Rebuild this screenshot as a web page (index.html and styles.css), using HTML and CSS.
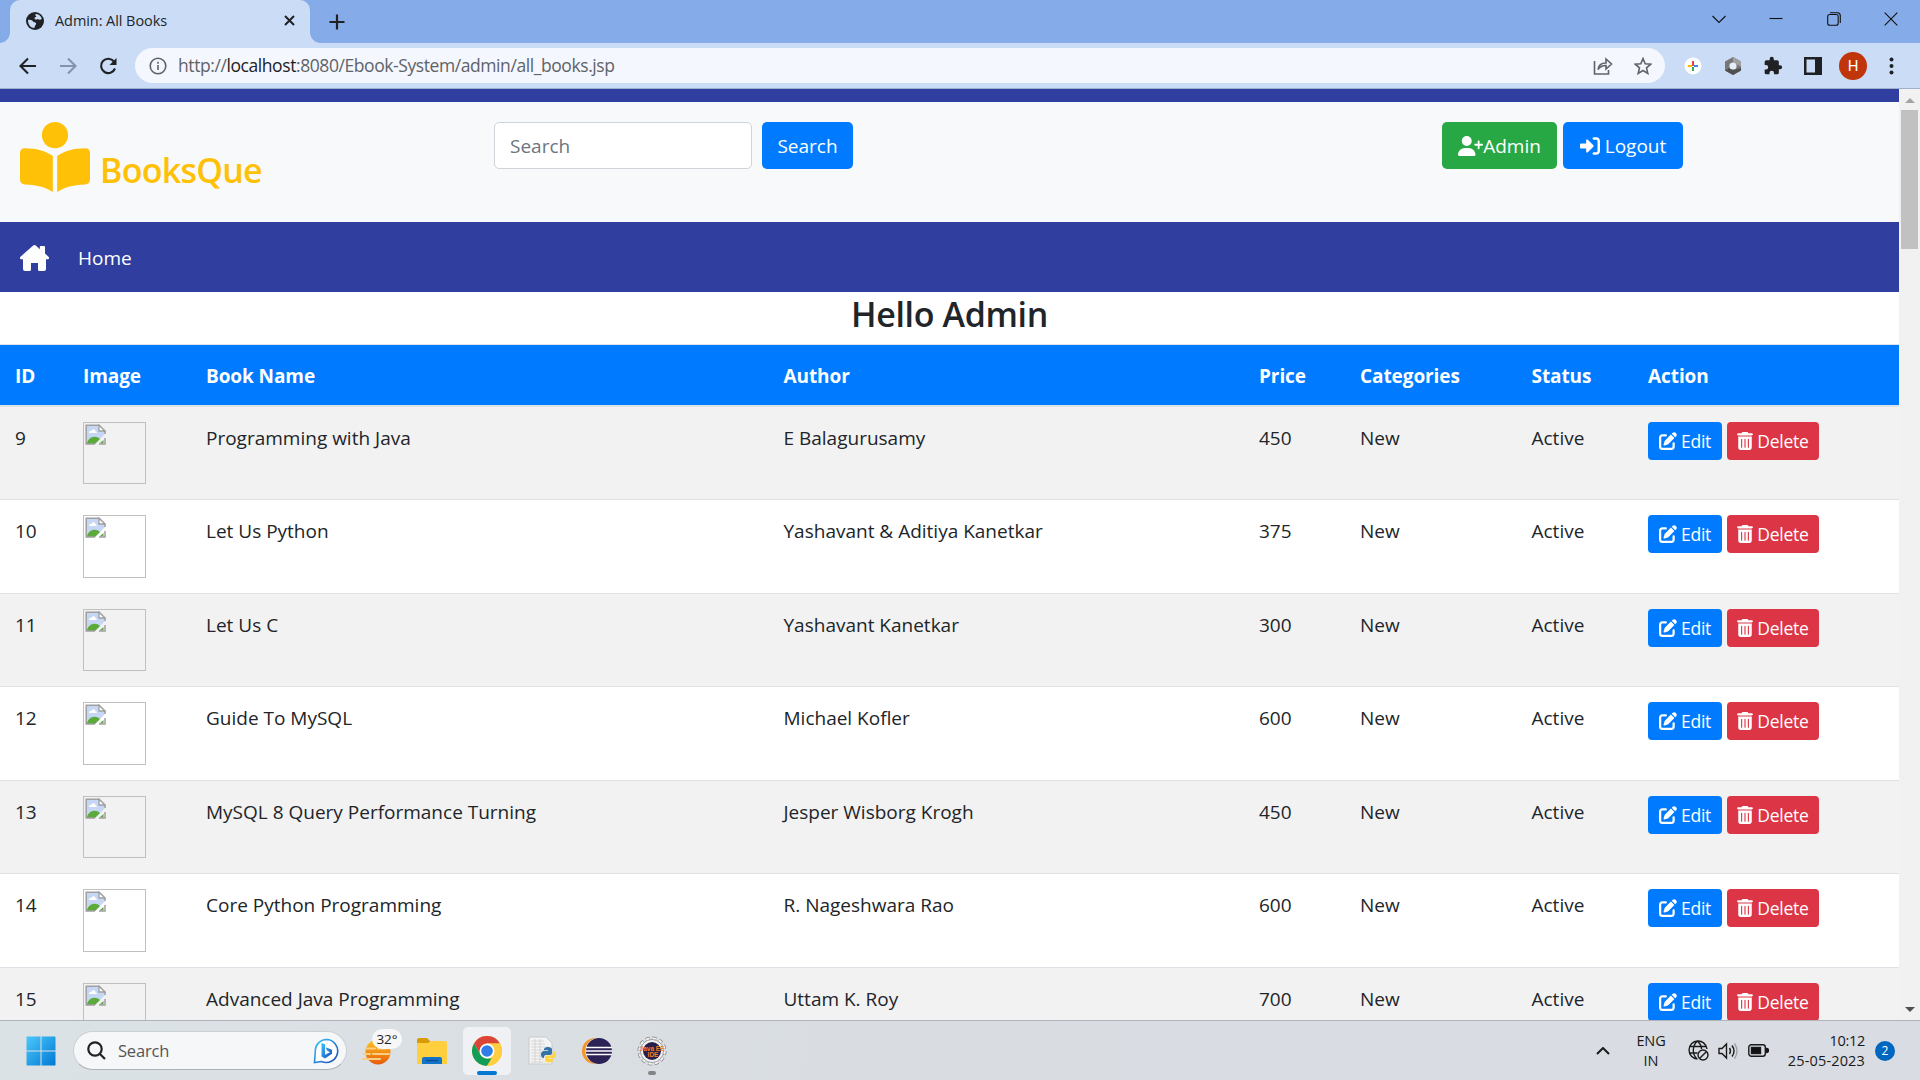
FILE: index.html
```html
<!DOCTYPE html>
<html lang="en">
<head>
<meta charset="utf-8">
<title>Admin: All Books</title>
<link rel="stylesheet" href="styles.css">
</head>
<body>
<svg class="defs" width="0" height="0" aria-hidden="true">
  <symbol id="edit" viewBox="0 0 512 512"><path d="M471.600 21.700c-21.900-21.900-57.300-21.900-79.200 0L362.300 51.700l97.900 97.900 30.100-30.100c21.900-21.900 21.900-57.300 0-79.200L471.600 21.700zm-299.200 220c-6.100 6.100-10.800 13.600-13.500 21.900l-29.600 88.800c-2.900 8.600-.6 18.100 5.800 24.600s15.900 8.700 24.600 5.800l88.800-29.600c8.200-2.700 15.700-7.400 21.900-13.500L437.700 172.300 339.700 74.300 172.400 241.700zM96 64C43 64 0 107 0 160V416c0 53 43 96 96 96H352c53 0 96-43 96-96V320c0-17.700-14.300-32-32-32s-32 14.300-32 32v96c0 17.700-14.300 32-32 32H96c-17.700 0-32-14.300-32-32V160c0-17.700 14.300-32 32-32h96c17.700 0 32-14.300 32-32s-14.300-32-32-32H96z"/></symbol>
  <symbol id="trash" viewBox="0 0 448 512"><path fill-rule="evenodd" d="M135.200 17.700C140.600 6.800 151.700 0 163.800 0H284.200c12.100 0 23.200 6.800 28.600 17.700L320 32h96c17.700 0 32 14.300 32 32s-14.300 32-32 32H32C14.300 96 0 81.700 0 64S14.300 32 32 32h96l7.200-14.300zM32 128H416V448c0 35.300-28.700 64-64 64H96c-35.300 0-64-28.700-64-64V128zm80 80V432c0 22 32 22 32 0V208c0-22-32-22-32 0zm96 0V432c0 22 32 22 32 0V208c0-22-32-22-32 0zm96 0V432c0 22 32 22 32 0V208c0-22-32-22-32 0z"/></symbol>
  <symbol id="broken" viewBox="0 0 21 21"><path fill="#c5d7f5" d="M1 1h13l6 6v3L10 20H1z"/><path fill="#fff" d="M4 9c0-2 2-2.500 2.500-2C7 4.500 10.500 4.500 10.500 7.500c2 0 2 1.500 0 1.500z"/><path fill="#5bab3a" d="M2 19c2-7 9-8 13-4l-5 5H2zM18.500 16v3.500h-4z"/><path fill="none" stroke="#a0a0a0" stroke-width="1.500" d="M10 20H1.200V1.200H14l6 6V10M20 14v6h-6"/><path fill="#fff" stroke="#a0a0a0" stroke-width="1.300" d="M14 1.200V7h6z"/></symbol>
</svg>

<header class="tabs">
  <div class="tab">
    <svg class="globe" viewBox="0 0 18 18"><circle cx="9" cy="9" r="9" fill="#202124"/><path fill="#cbdcf7" d="M2 8c2.500-.5 4.500.5 5.500 2 2 0 3 1 2.500 2.500-1 1-1.500 2-1.500 3.500C4.500 16 2 12.500 2 8zM9.500 2c3 0 5.500 2 6.300 4.800-1 1.400-3 1.200-4 .2-1 1-3.300.8-3.300-.8 0-1 1-1.200 2-1.200C10 4 9 3.500 9.500 2z"/></svg>
    <span class="tab-title">Admin: All Books</span>
    <svg class="tab-close" viewBox="0 0 11 11"><path d="M1 1l9 9M10 1l-9 9" stroke="#202124" stroke-width="2"/></svg>
  </div>
  <svg class="tab-new" viewBox="0 0 16 16"><path d="M8 .5v15M.5 8h15" stroke="#202124" stroke-width="2.200"/></svg>
  <div class="window-controls">
    <svg viewBox="0 0 14 14"><path d="M.5 4L7 10.500 13.500 4"/></svg>
    <svg viewBox="0 0 14 14"><path d="M.5 6.500h13"/></svg>
    <svg viewBox="0 0 14 14"><rect x=".7" y="2.500" width="10.500" height="10.800" rx="2"/><path d="M3 .7h7.500a3 3 0 0 1 2.800 3V11"/></svg>
    <svg viewBox="0 0 14 14"><path d="M.7.700l12.600 12.600M13.300.700L.7 13.300"/></svg>
  </div>
</header>

<div class="toolbar">
  <svg class="nav-icon" viewBox="0 0 18 18"><path d="M17 9H2M9 1.500L1.500 9 9 16.500"/></svg>
  <svg class="nav-icon muted" viewBox="0 0 18 18"><path d="M1 9h15M9 1.500L16.500 9 9 16.500"/></svg>
  <svg class="nav-icon" viewBox="0 0 18 18"><path d="M15 4.500A7.200 7.200 0 1 0 16 11.500"/><path d="M17.500 1v7h-7z" fill="#202124" stroke="none"/></svg>
  <div class="address">
    <svg class="info" viewBox="0 0 18 18"><circle cx="9" cy="9" r="7.800"/><path d="M9 8v5M9 4.800v2"/></svg>
    <span class="url">http://<b>localhost</b>:8080/Ebook-System/admin/all_books.jsp</span>
    <svg class="share" viewBox="0 0 20 18"><path d="M1.500 4v13h14v-4M5 12.500c.5-4 3.500-6.500 8-6.500V2l5.500 5-5.500 5V8.500c-3.500 0-6 1-8 4z"/></svg>
    <svg class="star" viewBox="0 0 18 18"><path d="M9 1.600l2.200 5.200 5.600.4-4.300 3.700 1.300 5.500L9 13.500l-4.800 2.900 1.300-5.500L1.200 7.200l5.600-.4z"/></svg>
  </div>
  <div class="extensions">
    <svg viewBox="0 0 20 20"><circle cx="10" cy="10" r="8.500" fill="#fff"/><g stroke-width="2"><path stroke="#ea4335" d="M10 5v5"/><path stroke="#fbbc04" d="M5 10h4"/><path stroke="#34a853" d="M10 11v4"/><path stroke="#4285f4" d="M11 10h4"/></g></svg>
    <svg viewBox="0 0 20 20"><path fill="#777" d="M10 1l8 4.500v9L10 19l-8-4.500v-9z"/><path fill="#505050" d="M2 14.500l5-3 3 2.500 8-2v2.500L10 19z"/><path fill="#a0a0a0" d="M10 1l8 4.500v5l-4-2L10 6z"/><circle cx="10" cy="10" r="3.600" fill="#e6edf8"/></svg>
    <svg viewBox="0 0 24 24"><path fill="#202124" d="M20.500 11H19V7a2 2 0 0 0-2-2h-4V3.500a2.500 2.500 0 0 0-5 0V5H4a2 2 0 0 0-2 2v3.800h1.500a2.700 2.700 0 0 1 0 5.400H2V20a2 2 0 0 0 2 2h3.800v-1.500a2.700 2.700 0 0 1 5.400 0V22H17a2 2 0 0 0 2-2v-4h1.500a2.500 2.500 0 0 0 0-5z"/></svg>
    <svg viewBox="0 0 20 20"><path fill="#202124" fill-rule="evenodd" d="M1 1h18v18H1zM3.500 3.500v13H12v-13z"/></svg>
    <span class="avatar">H</span>
    <svg class="dots" viewBox="0 0 5 18"><circle cx="2.500" cy="2.500" r="2"/><circle cx="2.500" cy="9" r="2"/><circle cx="2.500" cy="15.500" r="2"/></svg>
  </div>
</div>

<div class="viewport">
  <main class="page">
    <div class="strip"></div>
    <div class="brand-bar">
      <h3 class="brand">
        <svg viewBox="0 0 512 512"><path d="M352 96c0 53-43 96-96 96s-96-43-96-96S203 0 256 0s96 43 96 96zM240 248V512c-52-32-104-51-206-55C15 456 0 441 0 423V224c0-18 14-32 32-32 86 0 156 20 208 56zM272 512V248c52-36 122-56 208-56 18 0 32 14 32 32V423c0 18-15 33-34 34-102 4-154 23-206 55z"/></svg>
        <span>BooksQue</span>
      </h3>
      <form class="search">
        <input type="text" placeholder="Search">
        <button type="button" class="btn primary">Search</button>
      </form>
      <div class="account">
        <a class="btn success"><svg class="user" viewBox="0 0 640 512"><path d="M96 128a128 128 0 1 1 256 0 128 128 0 1 1-256 0zM0 482c0-98 80-178 178-178h92c98 0 178 80 178 178 0 17-13 30-30 30H30c-17 0-30-13-30-30zM504 312V248H440c-32 0-32-48 0-48h64V136c0-32 48-32 48 0v64h64c32 0 32 48 0 48H552v64c0 32-48 32-48 0z"/></svg><span>Admin</span></a>
        <a class="btn primary"><svg class="login" viewBox="0 0 512 512"><path d="M352 96h64c18 0 32 14 32 32V384c0 18-14 32-32 32H352c-43 0-43 64 0 64h64c53 0 96-43 96-96V128c0-53-43-96-96-96H352c-43 0-43 64 0 64zM343 239L199 95c-7-7-17-9-26-5s-15 13-15 22v80H32c-18 0-32 14-32 32v64c0 18 14 32 32 32H158v80c0 10 6 18 15 22s19 2 26-5L343 273c9-9 9-25 0-34z"/></svg><span>Logout</span></a>
      </div>
    </div>
    <nav class="navbar">
      <svg viewBox="0 0 29 26"><path d="M13.200.6a2 2 0 0 1 2.600 0l4 3.600V2q0-1 1-1H24q1 0 1 1v6.500l3.500 3.200c1 1 .5 2.600-.8 2.600H26V24q0 2-2 2h-4.500q-1.500 0-1.500-1.500V18h-7v6.500Q11 26 9.500 26H5q-2 0-2-2v-9.700H1.300c-1.300 0-1.800-1.600-.8-2.600z"/></svg>
      <a>Home</a>
    </nav>
    <h3 class="greeting">Hello Admin</h3>
    <div class="table">
      <div class="thead cols"><span>ID</span><span>Image</span><span>Book Name</span><span>Author</span><span>Price</span><span>Categories</span><span>Status</span><span>Action</span></div>
      <div class="tbody" id="books"></div>
    </div>
  </main>
  <aside class="scrollbar"><i class="up"></i><div class="thumb"></div><i class="down"></i></aside>
</div>

<footer class="taskbar">
  <svg class="start" viewBox="0 0 30 30"><defs><linearGradient id="w" x2="1" y2="1"><stop stop-color="#4cc8fa"/><stop offset="1" stop-color="#0078d4"/></linearGradient></defs><path fill="url(#w)" d="M1 .5h13.500V14.500H.5V1zM15.500.5H29l.5.500v13.500h-14zM.5 15.500h14v14H1l-.5-.5zM15.500 15.500h14V29l-.5.500H15.500z"/></svg>
  <div class="task-search">
    <svg class="lens" viewBox="0 0 19 19"><circle cx="8" cy="8" r="6.700"/><path d="M13 13l5 5"/></svg>
    <span>Search</span>
    <svg class="bing" viewBox="0 0 26 26"><defs><linearGradient id="b" x2="1" y2="1"><stop stop-color="#35c8f5"/><stop offset="1" stop-color="#1b49c0"/></linearGradient></defs><path d="M13.500 1.500a11.500 11.500 0 1 1-5 22L1.500 24.500l.8-11A11.400 11.400 0 0 1 13.500 1.500z" fill="#fff" stroke="url(#b)" stroke-width="1.600"/><path fill="url(#b)" d="M8.500 5l3.500 1.200v10.500l5-2.500-3-1.700-1.300-3.200 6.300 2.400v4L12 20.500l-3.500-2z"/></svg>
  </div>
  <div class="apps">
    <div class="app weather"><svg viewBox="0 0 30 30"><defs><linearGradient id="s" x2="0" y2="1"><stop stop-color="#ffc61a"/><stop offset="1" stop-color="#e8590c"/></linearGradient></defs><circle cx="16" cy="16" r="12.500" fill="url(#s)"/><path d="M4 12.500h9M16 12.500h8M2 18h6M11 18h16M1 23h17" stroke="#f6cf83" stroke-width="2.200" stroke-linecap="round"/></svg><span class="temp">32°</span></div>
    <div class="app"><svg viewBox="0 0 30 30"><path fill="#d99a08" d="M0 4q0-2 2-2h8l3 3v5H0z"/><path fill="#ffcf3f" d="M0 7h11l3-2h14q2 0 2 2v21H0z"/><path fill="#1273c8" d="M5 28v-5q0-2 2-2h16q2 0 2 2v5z"/><path d="M9 24.500h12" stroke="#0a4f94" stroke-width="1.500"/></svg></div>
    <div class="app active"><svg viewBox="0 0 30 30"><circle cx="15" cy="15" r="15" fill="#ffcd40"/><path fill="#db4437" d="M15 15L8.500 18.500 2 7.500a15 15 0 0 1 26 0H15z"/><path fill="#0f9d58" d="M2 7.500L8.500 18.700 15 22.500h6.300L14.500 30A15 15 0 0 1 2 7.500z"/><path fill="#ffcd40" d="M21.500 18.700L15 30A15 15 0 0 0 28 7.500H15z"/><circle cx="15" cy="15" r="7.500" fill="#fff"/><circle cx="15" cy="15" r="5.800" fill="#2f7de9"/></svg></div>
    <div class="app"><svg viewBox="0 0 30 30"><path fill="#f4f4f4" stroke="#c9c9c9" d="M2 1h17l6 6v21H2z"/><path d="M4 5h13M4 8h14M4 11h18M4 14h13M4 17h12M4 20h12M4 23h13M4 26h14M8 3v24M13 3v24" stroke="#cfcfcf" stroke-width=".8"/><path fill="#3572a5" d="M17 13.500q0-2.500 4-2.500t4 2.500V17q0 2-2 2h-4q-2 0-2 3-3 0-3-3.500T17 15h4v-.8h-4z"/><path fill="#ffd445" d="M26 15q3 0 3 3.500T26 22h-4v.8h4v1.200q0 2.500-4 2.500T18 24v-2.500q0-2 2-2h4q2 0 2-2.500z"/></svg></div>
    <div class="app"><svg viewBox="0 0 30 30"><circle cx="13" cy="15" r="13" fill="#f89426"/><circle cx="16.500" cy="15" r="13.200" fill="#e7e3ef"/><circle cx="17" cy="15" r="13" fill="#2c2255"/><path d="M4 11.500h26M4 15h26M4 18.500h26" stroke="#fff" stroke-width="1.700"/></svg></div>
    <div class="app open"><svg viewBox="0 0 30 30"><circle cx="15" cy="15" r="13" fill="none" stroke="#7d7d7d" stroke-width="3" stroke-dasharray="4 2.800"/><circle cx="15" cy="15" r="12.500" fill="none" stroke="#f3f3f3" stroke-width="2.500" stroke-dasharray="3.500 3.050"/><circle cx="15" cy="15" r="11.500" fill="#f3f3f3" stroke="#888" stroke-width=".8"/><circle cx="15" cy="15" r="9" fill="#27204a"/><text x="15" y="14.500" text-anchor="middle">Java EE</text><text x="16" y="20.500" text-anchor="middle">IDE</text></svg></div>
  </div>
  <div class="tray">
    <svg class="chev" viewBox="0 0 14 8"><path d="M1 7l6-6 6 6"/></svg>
    <div class="lang">ENG<br>IN</div>
    <svg class="net" viewBox="0 0 21 21"><path d="M19 9A9 9 0 1 0 9.500 19M9.500 1C4 6 4 14 9 19M9.500 1c3 3 4 5 4 8M2 6.500h16M1.500 13h8"/><circle cx="15" cy="15" r="5"/><path d="M11.500 18.500l7-7"/></svg>
    <svg class="vol" viewBox="0 0 20 18"><path d="M1 6.500h3L8.500 2v14L4 11.500H1zM11.500 6q2 3 0 6M14 3.500q4 5.500 0 11"/><path opacity=".3" d="M16.500 1.500q5 7.500 0 15"/></svg>
    <svg class="bat" viewBox="0 0 21 13"><rect x=".8" y=".8" width="16.500" height="11.400" rx="2.500"/><path fill="#111" d="M3.500 3.500h9v6h-9zM18.500 4.500q2 0 2 2t-2 2z"/></svg>
    <div class="clock">10:12<br><span>25-05-2023</span></div>
    <span class="badge">2</span>
  </div>
</footer>
<script src="books.js"></script>
</body>
</html>
```

FILE: styles.css
```css
* { box-sizing: border-box; }
body { margin: 0; width: 1920px; height: 1080px; overflow: hidden; display: flex; flex-direction: column; font-family: "Open Sans", "Noto Sans", sans-serif; color: #212529; }
svg { display: block; flex: none; }
.defs { position: absolute; }

.tabs { height: 43px; flex: none; background: #85ace9; display: flex; align-items: center; padding-left: 10px; padding-right: 22px; }
.tab { position: relative; width: 300px; height: 43px; background: #cbdcf7; border-radius: 10px 10px 0 0; display: flex; align-items: center; padding: 0 15px 2px 16px; }
.tab::before, .tab::after { content: ""; position: absolute; bottom: 0; width: 10px; height: 10px; }
.tab::before { left: -10px; background: radial-gradient(circle at 0 0, transparent 9.500px, #cbdcf7 10px); }
.tab::after { right: -10px; background: radial-gradient(circle at 100% 0, transparent 9.500px, #cbdcf7 10px); }
.globe { width: 18px; height: 18px; }
.tab-title { margin-left: 11px; flex: 1; font-size: 14.500px; letter-spacing: -.07px; white-space: nowrap; }
.tab-close { width: 11px; height: 11px; }
.tab-new { width: 16px; height: 16px; margin-left: 19px; }
.window-controls { margin-left: auto; display: flex; gap: 43.300px; height: 38px; align-items: center; align-self: flex-start; }
.window-controls svg { width: 14px; height: 14px; fill: none; stroke: #111; stroke-width: 1.100; }

.toolbar { height: 46px; flex: none; background: #cbdcf7; border-bottom: 1px solid #9fb0cc; display: flex; align-items: center; padding-left: 19px; }
.nav-icon { width: 18px; height: 18px; margin-right: 22px; fill: none; stroke: #202124; stroke-width: 2.100; }
.nav-icon.muted { stroke: #8492ab; }
.address { width: 1530px; height: 35px; margin-left: -4px; border-radius: 18px; background: #f4f7fd; display: flex; align-items: center; padding: 0 13px 0 14px; }
.address svg { fill: none; stroke: #5f6368; stroke-width: 1.600; }
.info { width: 18px; height: 18px; }
.url { margin-left: 11px; flex: 1; font-size: 17.500px; line-height: 24px; padding-bottom: 1px; letter-spacing: -.42px; color: #5f6368; }
.url b { font-weight: 400; color: #202124; }
.share { width: 20px; height: 18px; margin-right: 21px; }
.star { width: 18px; height: 18px; }
.extensions { flex: 1; display: flex; align-items: center; gap: 20px; padding-left: 18px; }
.extensions svg { width: 20px; height: 20px; }
.extensions .avatar { margin-left: -4px; width: 28px; height: 28px; border-radius: 50%; background: #c1350b; color: #fff; font: 15px/28px Roboto, sans-serif; text-align: center; }
.extensions .dots { width: 5px; height: 18px; margin-left: 2px; fill: #202124; }

.viewport { height: 931px; flex: none; display: flex; overflow: hidden; background: #fff; }
.page { width: 1899px; font-size: 19px; }
.strip { height: 13px; background: #303f9f; }
.brand-bar { height: 120px; background: #f8f9fa; display: flex; align-items: flex-start; padding: 20px 216px 0 20px; }
.brand { margin: 0; width: 474px; display: flex; color: #ffc107; font-size: 34px; font-weight: 600; letter-spacing: -.75px; line-height: 42px; }
.brand svg { width: 70px; height: 70px; fill: currentColor; }
.brand span { margin: 27px 0 0 10px; }
.search { display: flex; gap: 10px; }
.search input { width: 258px; height: 47px; border: 1px solid #ced4da; border-radius: 5px; padding: 0 15px; font: inherit; background: #fff; }
.search input::placeholder { color: #6c757d; opacity: 1; }
.btn { display: flex; align-items: center; justify-content: center; height: 47px; border: 0; border-radius: 5px; color: #fff; font: inherit; white-space: nowrap; }
.btn svg { fill: currentColor; }
.primary { background: #007bff; }
.success { background: #28a745; }
.danger { background: #dc3545; }
.search .btn { width: 91px; padding: 0; }
.account { margin-left: auto; display: flex; gap: 6px; }
.account .success { width: 115px; }
.account .primary { width: 120px; gap: 5px; }
.user { width: 25px; height: 20px; }
.login { width: 20px; height: 20px; }
.navbar { height: 70px; background: #303f9f; display: flex; align-items: center; padding: 1px 20px 0; color: #fff; }
.navbar svg { width: 29px; height: 26px; fill: currentColor; }
.navbar a { margin-left: 29px; }
.greeting { margin: 0; height: 52px; line-height: 45px; font-size: 34px; font-weight: 600; letter-spacing: -.35px; text-align: center; }
.cols { display: grid; grid-template-columns: 68px 123px 577.500px 475.500px 101px 171.500px 116.500px 1fr; padding-left: 15px; }
.thead { height: 63px; border-top: 1px solid #dee2e6; border-bottom: 2px solid #dee2e6; background: #007bff; color: #fff; font-weight: 700; letter-spacing: -.08px; line-height: 62px; }
.row { height: 93px; border-top: 1px solid #dee2e6; padding-top: 15px; }
.row:nth-child(even) { height: 94px; }
.row:first-child { height: 92px; border-top: 0; }
.row:nth-child(odd) { background: #f2f2f2; }
.row > span { line-height: 32px; }
.cover { width: 63px; height: 62px; border: 1px solid silver; padding: 1px; }
.row:nth-child(even) .cover { height: 63px; }
.cover svg { width: 21px; height: 21px; }
.actions { display: flex; gap: 5px; }
.actions .btn { height: 38px; border-radius: 4px; font-size: 17.500px; letter-spacing: -.25px; gap: 4px; }
.actions .primary { width: 74px; }
.actions .danger { width: 92px; }
.actions .primary svg { width: 18px; height: 18px; }
.actions .danger svg { width: 16px; height: 18px; }
.scrollbar { width: 21px; background: #f1f1f1; display: flex; flex-direction: column; align-items: center; padding: 9px 0 8px; }
.scrollbar i { border: 5px solid transparent; }
.scrollbar .up { border-top: 0; border-bottom-color: #a3a3a3; }
.scrollbar .down { margin-top: auto; border-bottom: 0; border-top-color: #505050; }
.thumb { width: 17px; height: 139px; margin-top: 7px; background: #c1c1c1; }

.taskbar { height: 60px; flex: none; border-top: 1px solid #b0b3b7; background: linear-gradient(100deg, #dbe2e6, #d9dde2 45%, #d9dce2); display: flex; align-items: center; padding: 0 25px 0 26px; color: #1a1a1a; }
.start { width: 30px; height: 30px; }
.task-search { width: 274px; height: 39px; margin-left: 17px; border: 1px solid #cbd0d3; border-bottom-color: #adb1b5; border-radius: 20px; background: #f5f7f8; display: flex; align-items: center; padding: 0 7px 0 13px; font-size: 16.500px; letter-spacing: -.2px; color: #555; }
.lens { width: 19px; height: 19px; fill: none; stroke: #222; stroke-width: 2.200; }
.task-search span { margin-left: 12px; flex: 1; }
.bing { width: 26px; height: 26px; }
.apps { display: flex; margin-left: 6px; gap: 7px; }
.app { position: relative; width: 48px; height: 48px; padding: 9px; border-radius: 5px; }
.app svg { width: 30px; height: 30px; }
.app text { font: 700 6.500px "Liberation Sans", sans-serif; fill: #ff7b1c; }
.app.active { background: #eff1f4; }
.app.active::after, .app.open::after { content: ""; position: absolute; left: 14px; bottom: 0; width: 20px; height: 4px; border-radius: 2px; background: #0078d4; }
.app.open::after { left: 20px; width: 8px; background: #858585; }
.temp { position: absolute; left: 19px; top: 2px; width: 30px; height: 20px; border-radius: 10px; background: #f7f7f7; font-size: 13.500px; line-height: 20px; text-align: center; color: #222; }
.tray { margin-left: auto; display: flex; align-items: center; font-size: 14.500px; line-height: 20px; }
.tray svg { fill: none; stroke: #1a1a1a; stroke-width: 1.400; }
.chev { width: 14px; height: 8px; }
.tray .chev { stroke-width: 2; }
.lang { width: 82px; text-align: center; letter-spacing: -.1px; }
.net { width: 21px; height: 21px; margin-left: -4px; }
.vol { width: 20px; height: 18px; margin-left: 9px; }
.bat { width: 21px; height: 13px; margin-left: 10px; }
.clock { margin-left: 16px; width: 80px; text-align: right; letter-spacing: -.3px; white-space: nowrap; }
.clock span { letter-spacing: .15px; }
.badge { margin-left: 10px; width: 20px; height: 20px; border-radius: 50%; background: #0067c0; color: #fff; font-size: 12px; text-align: center; }
```

FILE: books.js
```js
const books = [
  [9, "Programming with Java", "E Balagurusamy", 450],
  [10, "Let Us Python", "Yashavant & Aditiya Kanetkar", 375],
  [11, "Let Us C", "Yashavant Kanetkar", 300],
  [12, "Guide To MySQL", "Michael Kofler", 600],
  [13, "MySQL 8 Query Performance Turning", "Jesper Wisborg Krogh", 450],
  [14, "Core Python Programming", "R. Nageshwara Rao", 600],
  [15, "Advanced Java Programming", "Uttam K. Roy", 700]
];
document.getElementById("books").innerHTML = books.map(([id, name, author, price]) => `
  <div class="row cols">
    <span>${id}</span>
    <div class="cover"><svg><use href="#broken"/></svg></div>
    <span>${name}</span>
    <span>${author.replace("&", "&amp;")}</span>
    <span>${price}</span>
    <span>New</span>
    <span>Active</span>
    <div class="actions">
      <a class="btn primary"><svg><use href="#edit"/></svg><span>Edit</span></a>
      <a class="btn danger"><svg><use href="#trash"/></svg><span>Delete</span></a>
    </div>
  </div>`).join("");
```
